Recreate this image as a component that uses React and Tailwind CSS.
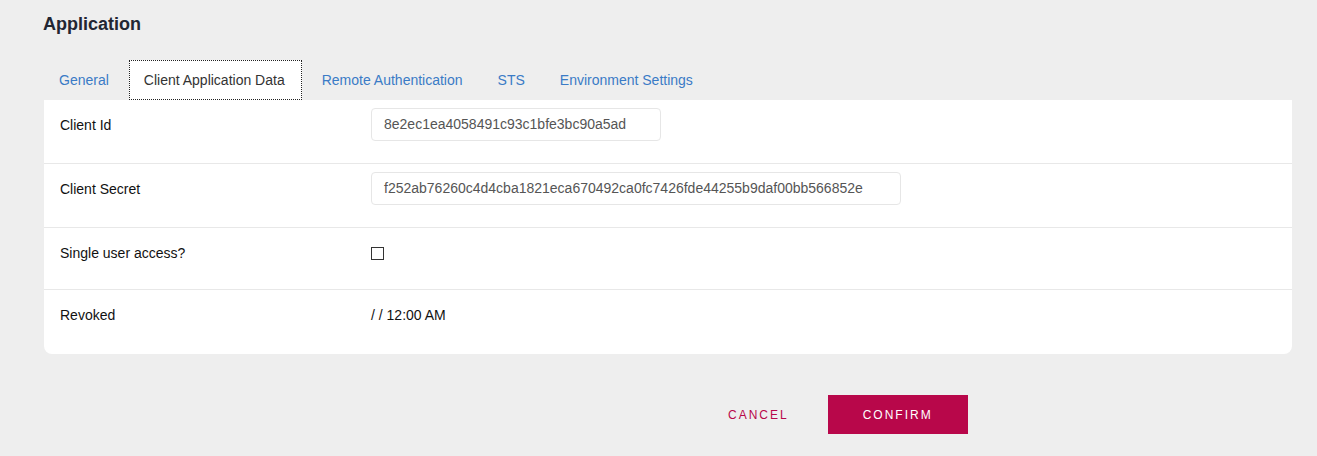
export default function App() {
  const tabs = ["General", "Client Application Data", "Remote Authentication", "STS", "Environment Settings"];
  return (
    <div className="min-h-[456px] w-[1317px] bg-[#eeeeee] pl-[43px] pr-[25px] pt-[13px]" style={{ fontFamily: "Arial, 'Liberation Sans', sans-serif" }}>
      <h1 className="text-[18px] font-bold leading-[22px] text-[#222633]">Application</h1>
      <div className="ml-[1px] mt-[25px] flex h-[40px] items-stretch">
        {tabs.map((t, i) =>
          i === 1 ? (
            <div key={t} className="mr-[5px] flex items-center border border-dotted border-[#222] bg-white pl-[14px] pr-[16px] text-[14px] text-[#333]">
              {t}
            </div>
          ) : (
            <div key={t} className="mr-[5px] flex items-center px-[15px] text-[14px] text-[#3a7bc6]">
              {t}
            </div>
          )
        )}
      </div>
      <div className="ml-[1px] w-[1248px] rounded-b-[8px] bg-white text-[14px] text-[#111]">
        <div className="flex h-[64px] border-b border-[#e8e8e8] pt-[8px]">
          <div className="w-[327px] pl-[16px] pt-[9px] leading-[17px]">Client Id</div>
          <div className="flex h-[33px] w-[290px] items-center rounded-[4px] border border-[#e6e6e6] px-[12px] text-[#555]">8e2ec1ea4058491c93c1bfe3bc90a5ad</div>
        </div>
        <div className="flex h-[64px] border-b border-[#e8e8e8] pt-[8px]">
          <div className="w-[327px] pl-[16px] pt-[9px] leading-[17px]">Client Secret</div>
          <div className="flex h-[33px] w-[530px] items-center rounded-[4px] border border-[#e6e6e6] px-[12px] text-[#555]">f252ab76260c4d4cba1821eca670492ca0fc7426fde44255b9daf00bb566852e</div>
        </div>
        <div className="flex h-[62px] border-b border-[#e8e8e8] pt-[17px]">
          <div className="w-[327px] pl-[16px] leading-[17px]">Single user access?</div>
          <div className="mt-[2px] h-[13px] w-[13px] border border-[#333]"></div>
        </div>
        <div className="flex h-[64px] pt-[17px]">
          <div className="w-[327px] pl-[16px] leading-[17px]">Revoked</div>
          <div className="leading-[17px]">/ / 12:00 AM</div>
        </div>
      </div>
      <div className="mt-[41px] flex h-[39px] items-center pl-[685px]">
        <div className="mr-[39px] text-[12px] tracking-[2px] text-[#b8074a]">CANCEL</div>
        <div className="flex h-[39px] w-[140px] items-center justify-center bg-[#b8074a] text-[12px] tracking-[2px] text-white">CONFIRM</div>
      </div>
    </div>
  );
}
